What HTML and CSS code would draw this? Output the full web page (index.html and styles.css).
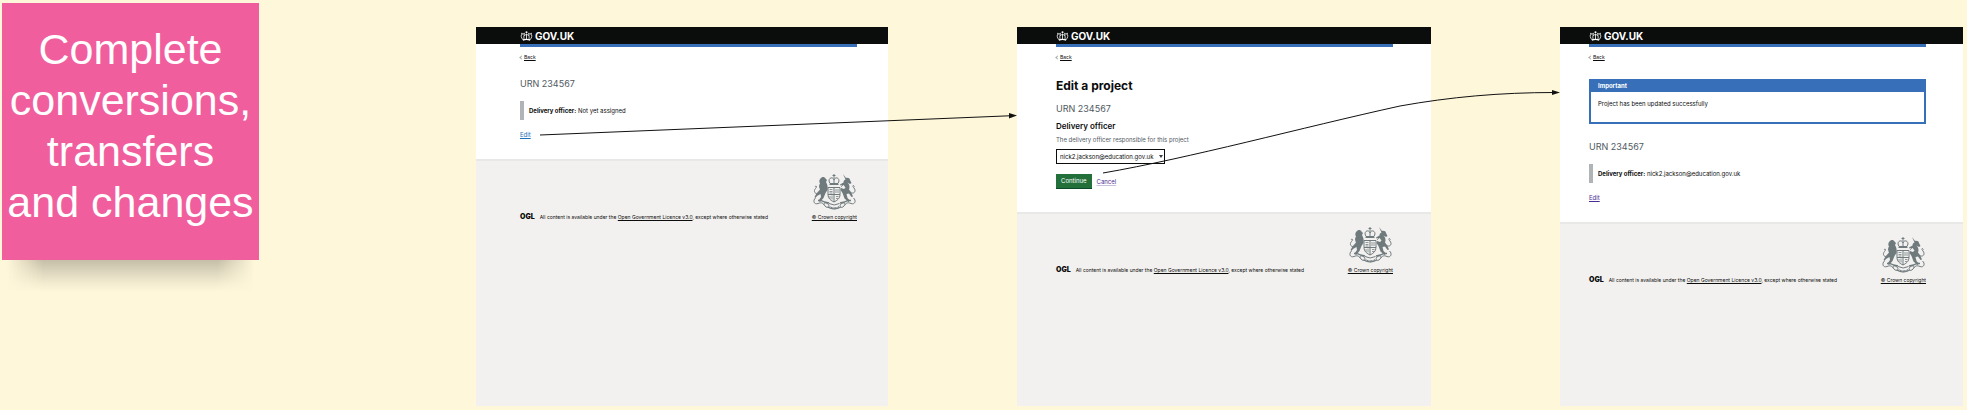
FILE: index.html
```
<!DOCTYPE html>
<html lang="en">
<head>
<meta charset="utf-8">
<title>Complete conversions, transfers and changes</title>
<link rel="stylesheet" href="styles.css">
</head>
<body>
<svg class="symbols" aria-hidden="true">
  <symbol id="crown" viewBox="0 0 36 30">
    <g fill="none" stroke="currentColor" stroke-width="2.4">
      <path d="M7 26C2 20 0 12 5 9c4-2 7 1 8 6M29 26c5-6 7-14 2-17-4-2-7 1-8 6"/>
      <path d="M11 26C10 20 9 15 12 11M25 26c1-6 2-11-1-15M18 8v17M14 11h8"/>
      <path d="M7 27q11-4 22 0" stroke-width="4"/>
    </g>
    <g fill="currentColor"><circle cx="18" cy="4" r="3"/><circle cx="11" cy="7" r="2"/><circle cx="25" cy="7" r="2"/><circle cx="4" cy="7" r="2"/><circle cx="32" cy="7" r="2"/></g>
  </symbol>
  <symbol id="crest" viewBox="0 0 86 72">
    <g fill="currentColor">
      <path d="M15 9c3-4 8-4 10 0l3 3-2 4c3 5 4 10 3 16l-4 6-4 10-7 8-3-3 5-7-1-6-7 4-3 4-2-2 4-7 7-8c-2-4-3-8 0-12-2-3-2-7 1-10z"/>
      <path d="M60 0l6 8c4-1 8 1 8 4l3 6-3 2-5-3c4 4 5 9 3 14l5 7 3 7-3 1-5-7-5 1 2 8 5 5-3 3-8-7-4-11-4-6 1-4 6 2 3-3-4-5-6 1-1-2 7-4c0-3 1-5 4-6z"/>
    </g>
    <g fill="none" stroke="currentColor" stroke-width="2">
      <path d="M42 0v8M39 3h6M32 14c0-8 9-8 10-2 1-6 10-6 10 2l-2 5H34zM42 9v9M33 21h18"/>
      <path d="M30 27h24v14c0 8-6 12-12 15-6-3-12-7-12-15zM42 27v29M30 41h24"/>
      <path d="M28 26l-4-4M56 26l4-4M33 31h6M33 35h6M33 38h6M46 30v8M50 30v8M34 44v6M38 43v8M46 45h5M46 49h4" stroke-width="1.5"/>
      <path d="M13 37C4 43 0 34 5 29c4-4 1-7-1-3M74 36c8 6 13-2 8-8-4-4-2-7 1-3"/>
      <path d="M5 48c-6 5-3 14 5 11 7-3 10-1 14 5 5 6 11 1 6-4-5-4-9-2-8 2M81 48c6 5 3 14-5 11-7-3-10-1-14 5-5 6-11 1-6-4 5-4 9-2 8 2"/>
      <path d="M10 53q7-1 13 3l9 2M76 53q-7-1-13 3l-9 2" stroke-width="3"/>
      <path d="M29 66q13 8 27 0M32 59q10 6 21 0" stroke-width="2"/>
      <path d="M33 66q9 5 19 0" stroke-dasharray="2 1" stroke-width="4"/>
    </g>
  </symbol>
</svg>

<main class="board">
  <section class="note"><p>Complete conversions, transfers and&nbsp;changes</p></section>

  <article class="screen screen-view">
    <header class="top"><a class="logo" href="#"><svg class="logo-crown"><use href="#crown"/></svg>GOV.UK</a></header>
    <div class="content">
      <a class="back" href="#"><span class="chevron"></span><span class="back-text">Back</span></a>
      <p class="caption lead">URN 234567</p>
      <p class="inset"><span><b>Delivery officer:</b> Not yet assigned</span></p>
      <a class="edit" href="#">Edit</a>
    </div>
    <footer class="foot">
      <p class="licence"><b class="ogl">OGL</b><span>All content is available under the <a href="#">Open Government Licence v3.0</a>, except where otherwise stated</span></p>
      <a class="copyright" href="#"><svg class="crest"><use href="#crest"/></svg>© Crown copyright</a>
    </footer>
  </article>

  <article class="screen screen-form">
    <header class="top"><a class="logo" href="#"><svg class="logo-crown"><use href="#crown"/></svg>GOV.UK</a></header>
    <form class="content">
      <a class="back" href="#"><span class="chevron"></span><span class="back-text">Back</span></a>
      <h1 class="title lead">Edit a project</h1>
      <p class="caption">URN 234567</p>
      <label class="label" for="officer">Delivery officer</label>
      <p class="hint" id="officer-hint">The delivery officer responsible for this project</p>
      <span class="select-wrap">
        <select class="select" id="officer" aria-describedby="officer-hint"><option>nick2.jackson@education.gov.uk</option></select>
      </span>
      <div class="actions"><button class="button" type="button">Continue</button><a class="cancel" href="#">Cancel</a></div>
    </form>
    <footer class="foot">
      <p class="licence"><b class="ogl">OGL</b><span>All content is available under the <a href="#">Open Government Licence v3.0</a>, except where otherwise stated</span></p>
      <a class="copyright" href="#"><svg class="crest"><use href="#crest"/></svg>© Crown copyright</a>
    </footer>
  </article>

  <article class="screen screen-done">
    <header class="top"><a class="logo" href="#"><svg class="logo-crown"><use href="#crown"/></svg>GOV.UK</a></header>
    <div class="content">
      <a class="back" href="#"><span class="chevron"></span><span class="back-text">Back</span></a>
      <section class="banner lead">
        <h2 class="banner-title">Important</h2>
        <p class="banner-text">Project has been updated successfully</p>
      </section>
      <p class="caption lead">URN 234567</p>
      <p class="inset"><span><b>Delivery officer:</b> nick2.jackson@education.gov.uk</span></p>
      <a class="edit visited" href="#">Edit</a>
    </div>
    <footer class="foot">
      <p class="licence"><b class="ogl">OGL</b><span>All content is available under the <a href="#">Open Government Licence v3.0</a>, except where otherwise stated</span></p>
      <a class="copyright" href="#"><svg class="crest"><use href="#crest"/></svg>© Crown copyright</a>
    </footer>
  </article>

  <svg class="arrows" viewBox="0 0 1967 410" preserveAspectRatio="none" aria-hidden="true">
    <g fill="none" stroke="#111" stroke-width="1">
      <path d="M540 135L1012 115.700"/>
      <path d="M1103 173C1190 158 1300 128 1400 106C1450 97 1500 92.500 1555 92.500"/>
    </g>
    <path d="M1017 115.500l-8-2.500v5.500zM1560 92.500l-8-2.500v5z" fill="#111"/>
  </svg>
</main>
</body>
</html>
```
FILE: styles.css
```
* { box-sizing: border-box; }
body { margin: 0; background: #fef7da; color: #0b0c0c; font-family: Inter, "Liberation Sans", sans-serif; font-size: 6px; line-height: 8px; }
p, h1, h2 { margin: 0; }
a { color: inherit; }
.symbols { display: none; }

.board {
  position: relative;
  display: grid;
  grid-template-columns: 257fr 217fr 412fr 129fr 414fr 129fr 403fr;
  min-height: 100vh;
  padding: 3px 4px 4px 2px;
}
.arrows { position: absolute; inset: 0; width: 100%; height: 100%; pointer-events: none; }

.note {
  position: relative;
  z-index: 0;
  align-self: start;
  aspect-ratio: 1;
  padding-top: 21px;
  background: #f15e9d;
  color: #fff;
  font: 43px/51px "Liberation Sans", sans-serif;
  text-align: center;
}
.note::after {
  content: "";
  position: absolute;
  z-index: -1;
  top: 100%;
  left: 0;
  right: 0;
  height: 32px;
  background: linear-gradient(#c5bea8, #dcd5bd 35%, #f4edd1 75%, #fef7da);
  -webkit-mask-image: linear-gradient(90deg, transparent 2%, #000 16%, #000 84%, transparent 98%);
  mask-image: linear-gradient(90deg, transparent 2%, #000 16%, #000 84%, transparent 98%);
}

.screen { --left: 44px; --right: 31px; display: flex; flex-direction: column; margin-top: 24px; background: #fff; }
.screen-view { grid-column: 3; }
.screen-form { --left: 39px; --right: 38px; grid-column: 5; }
.screen-done { --left: 29px; --right: 37px; grid-column: 7; }

.top { height: 17px; padding-left: var(--left); background: #0b0c0c; color: #fff; }
.logo { display: flex; align-items: center; gap: 2px; height: 17px; font-size: 10px; font-weight: 700; text-decoration: none; }
.logo-crown { width: 13px; height: 10px; }

.content { display: flex; flex-direction: column; align-items: flex-start; margin: 0 var(--right) 0 var(--left); padding-bottom: 20px; }
.content::before { content: ""; align-self: stretch; height: 3px; background: #3770b8; }
.screen-form .content { padding-bottom: 23px; }
.back { display: flex; align-items: center; gap: 1px; margin-top: 6px; font-size: 5px; text-decoration: none; }
.back-text { text-decoration: underline; }
.chevron { width: 3px; height: 3px; border: solid #a0a5a8; border-width: 0 0 1px 1px; transform: rotate(45deg); }
.caption { margin-top: 11px; color: #505a5f; font-size: 9px; line-height: 10px; }
.content .lead { margin-top: 18px; }
.title { font-size: 12px; line-height: 14px; }
.inset { display: flex; align-items: center; height: 19px; margin-top: 12px; padding-left: 5px; border-left: 4px solid #b1b4b6; }
.edit { margin-top: 11px; color: #1d70b8; }
.visited { color: #4c2c92; }

.label { margin-top: 8px; font-size: 8px; line-height: 9px; font-weight: 600; }
.hint { margin-top: 5px; color: #505a5f; font-size: 6px; }
.select-wrap { position: relative; display: flex; margin-top: 5px; }
.select-wrap::after { content: ""; position: absolute; right: 2px; top: 6px; border: 2px solid transparent; border-top: 3px solid #383f43; border-bottom: 0; }
.select { appearance: none; width: 109px; height: 15px; padding: 0 7px 0 3px; border: 1px solid #0b0c0c; border-radius: 0; background: #fff; color: #0b0c0c; font: inherit; }
.actions { display: flex; align-items: center; gap: 5px; margin-top: 10px; }
.button { height: 15px; padding: 0 5px; border: 0; border-bottom: 1px solid #0b4a28; background: #23703a; color: #fff; font: inherit; }
.cancel { color: #4c2c92; text-decoration-color: #c9c0de; }

.banner { align-self: stretch; border: 2px solid #3770b8; border-top: 0; }
.banner-title { padding-left: 7px; background: #3770b8; color: #fff; font-size: 6px; line-height: 13px; }
.banner-text { padding: 8px 7px 14px; }

.foot { display: flex; flex: 1; align-items: flex-start; justify-content: space-between; padding: 13px var(--right) 20px var(--left); border-top: 2px solid #e8e8e7; background: #f3f1f0; font-size: 5px; }
.licence { display: flex; align-items: center; gap: 5px; margin-top: 39px; }
.ogl { font-size: 7px; font-weight: 900; }
.copyright { display: flex; flex-direction: column; align-items: center; gap: 3px; }
.crest { width: 43px; height: 36px; color: #6f7a7c; }
```
